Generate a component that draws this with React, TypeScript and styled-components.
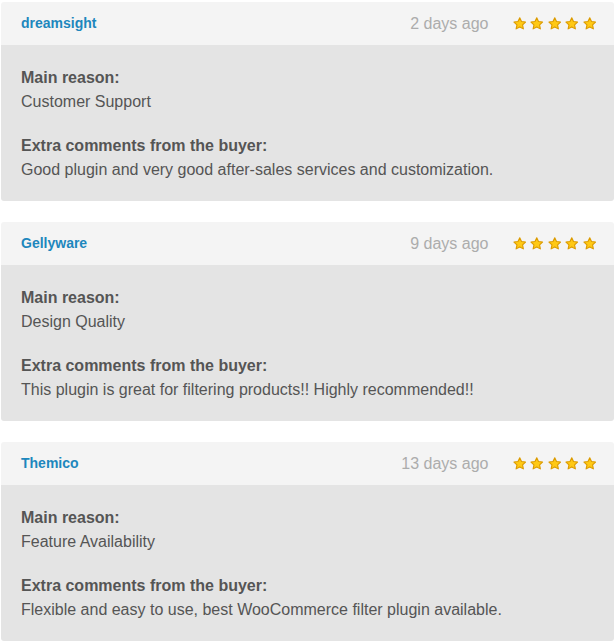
import React from "react";
import styled, { createGlobalStyle } from "styled-components";

const Global = createGlobalStyle`
  html, body { margin: 0; padding: 0; background: #ffffff; }
  body { font-family: "Liberation Sans", Arial, sans-serif; }
`;

const List = styled.div`
  display: flex;
  flex-direction: column;
  gap: 21px;
  padding: 2px 2px 0 1px;
`;

const Card = styled.section`
  border-radius: 3px;
  overflow: hidden;
`;

const Header = styled.header`
  display: flex;
  align-items: center;
  height: 43px;
  padding: 0 18px 0 20px;
  background: #f4f4f4;
`;

const User = styled.span`
  flex: 1;
  font-size: 14px;
  font-weight: bold;
  color: #1d87bd;
  position: relative;
  top: -1px;
`;

const Date = styled.span`
  font-size: 16px;
  color: #acacac;
  margin-right: 24px;
`;

const Stars = styled.div`
  display: flex;
  gap: 4px;
`;

const Body = styled.div`
  background: #e4e4e4;
  padding: 21px 20px 19px 20px;
  display: flex;
  flex-direction: column;
  gap: 20px;
`;

const Field = styled.div`
  display: flex;
  flex-direction: column;
  font-size: 16px;
  line-height: 24px;
  color: #555555;
`;

const Label = styled.div`
  font-weight: bold;
`;

const Value = styled.div``;

const Star = () => (
  <svg width="13.5" height="13.5" viewBox="0 0 24 24">
    <path
      d="M12 1.5l3.1 6.6 7.2.9-5.3 5 1.4 7.1L12 17.6l-6.4 3.5 1.4-7.1-5.3-5 7.2-.9z"
      fill="#ffc914"
      stroke="#dc9b00"
      strokeWidth="2"
      strokeLinejoin="round"
    />
  </svg>
);

const reviews = [
  {
    user: "dreamsight",
    date: "2 days ago",
    reason: "Customer Support",
    comment: "Good plugin and very good after-sales services and customization.",
  },
  {
    user: "Gellyware",
    date: "9 days ago",
    reason: "Design Quality",
    comment: "This plugin is great for filtering products!! Highly recommended!!",
  },
  {
    user: "Themico",
    date: "13 days ago",
    reason: "Feature Availability",
    comment: "Flexible and easy to use, best WooCommerce filter plugin available.",
  },
];

export default function App() {
  return (
    <>
      <Global />
      <List>
        {reviews.map((r) => (
          <Card key={r.user}>
            <Header>
              <User>{r.user}</User>
              <Date>{r.date}</Date>
              <Stars>
                {[0, 1, 2, 3, 4].map((i) => (
                  <Star key={i} />
                ))}
              </Stars>
            </Header>
            <Body>
              <Field>
                <Label>Main reason:</Label>
                <Value>{r.reason}</Value>
              </Field>
              <Field>
                <Label>Extra comments from the buyer:</Label>
                <Value>{r.comment}</Value>
              </Field>
            </Body>
          </Card>
        ))}
      </List>
    </>
  );
}
